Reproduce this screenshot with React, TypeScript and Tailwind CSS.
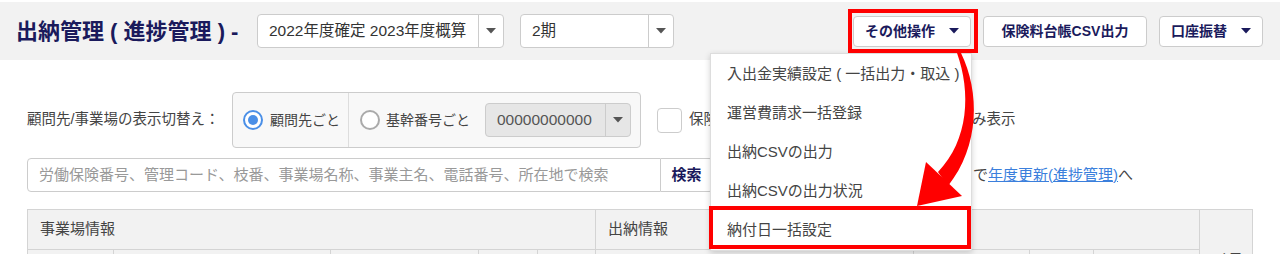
import React from 'react';

// 小さい三角 (セレクト・ボタンのキャレット)
const Caret: React.FC<{ className?: string }> = ({ className = 'text-[#555]' }) => (
  <svg width="10" height="6" viewBox="0 0 10 6" className={className}>
    <path d="M0 0 L10 0 L5 5.5 Z" fill="currentColor" />
  </svg>
);

const Select: React.FC<{ label: string; width: string; disabled?: boolean }> = ({ label, width, disabled }) => (
  <div className={`flex h-[34px] ${width} rounded-[4px] border border-[#ccc] ${disabled ? 'bg-[#e6e6e6]' : 'bg-white'}`}>
    <div className={`flex-1 flex items-center px-[11px] text-[15.5px] whitespace-nowrap overflow-hidden ${disabled ? 'text-[#555]' : 'text-[#333]'}`}>{label}</div>
    <div className="w-[25px] flex items-center justify-center border-l border-[#ccc]">
      <Caret />
    </div>
  </div>
);

const Radio: React.FC<{ checked?: boolean }> = ({ checked }) => (
  <span className={`shrink-0 w-[20px] h-[20px] rounded-full border-2 flex items-center justify-center bg-white ${checked ? 'border-[#4a8fe7]' : 'border-[#aaa]'}`}>
    {checked && <span className="w-[10px] h-[10px] rounded-full bg-[#4a8fe7]" />}
  </span>
);

const menuItems = [
  '入出金実績設定 ( 一括出力・取込 )',
  '運営費請求一括登録',
  '出納CSVの出力',
  '出納CSVの出力状況',
  '納付日一括設定',
];

const App: React.FC = () => {
  return (
    <div className="relative w-[1280px] h-[254px] overflow-hidden bg-white font-['Liberation_Sans','Noto_Sans_CJK_JP',sans-serif]">
      {/* ヘッダー */}
      <header className="h-[60px] bg-[#f2f2f2] border-t-2 border-white flex items-center pl-4 pr-[17px]">
        <h1 className="w-[225px] text-[22px] font-bold text-[#1a1a5c] whitespace-nowrap">出納管理 ( 進捗管理 ) -</h1>
        <div className="ml-4 flex gap-4">
          <Select label="2022年度確定 2023年度概算" width="w-[247px]" />
          <Select label="2期" width="w-[154px]" />
        </div>
        <div className="ml-auto flex gap-3">
          <button className="h-[31px] w-[118px] bg-white border border-[#ccc] rounded-[4px] flex items-center justify-center gap-[14px] text-[14px] font-bold text-[#1a1a5c]">
            その他操作 <Caret className="text-[#1a1a5c]" />
          </button>
          <button className="h-[31px] w-[164px] bg-white border border-[#ccc] rounded-[4px] text-[14px] font-bold text-[#1a1a5c]">
            保険料台帳CSV出力
          </button>
          <button className="h-[31px] w-[104px] bg-white border border-[#ccc] rounded-[4px] flex items-center justify-center gap-[14px] text-[14px] font-bold text-[#1a1a5c]">
            口座振替 <Caret className="text-[#1a1a5c]" />
          </button>
        </div>
      </header>

      {/* 検索条件 */}
      <div className="pl-[27px] pt-[32px] text-[14.5px] text-[#444]">
        <div className="flex items-center h-[56px]">
          <span className="w-[191px] whitespace-nowrap">顧問先/事業場の表示切替え：</span>
          <div className="ml-[14px] h-[56px] w-[409px] flex items-center border border-[#ccc] rounded-[4px] bg-[#f8f8f8] text-[14px]">
            <label className="flex items-center gap-[7px] px-[10px] h-full border-r border-[#ddd] w-[116px]">
              <Radio checked />
              <span className="whitespace-nowrap">顧問先ごと</span>
            </label>
            <label className="flex items-center gap-[6px] pl-[11px] h-full w-[136px]">
              <Radio />
              <span className="whitespace-nowrap">基幹番号ごと</span>
            </label>
            <div>
              <Select label="00000000000" width="w-[146px]" disabled />
            </div>
          </div>
          <span className="ml-4 w-[25px] h-[25px] rounded-[4px] border border-[#ccc] bg-white" />
          <span className="ml-[7px] w-[283px] whitespace-nowrap overflow-hidden">保険料の未納・過納がある顧問先/事業場の</span>
          <span className="whitespace-nowrap">み表示</span>
        </div>

        <div className="flex items-center mt-[10px] h-[34px]">
          <div className="w-[634px] h-[34px] border border-[#ccc] rounded-l-[4px] flex items-center px-[11px] text-[15px] text-[#999] whitespace-nowrap overflow-hidden">
            労働保険番号、管理コード、枝番、事業場名称、事業主名、電話番号、所在地で検索
          </div>
          <button className="w-[52px] h-[34px] border border-l-0 border-[#ccc] rounded-r-[4px] text-[15px] font-bold text-[#1a1a5c]">検索</button>
          <span className="ml-[16px] w-[244px] whitespace-nowrap overflow-hidden">※年度更新の手続きは各事業場画面</span>
          <span className="whitespace-nowrap text-[15px]">で<a className="text-[#3b7fdc] underline">年度更新(進捗管理)</a>へ</span>
        </div>

        {/* 一覧テーブル */}
        <table className="mt-[17px] border-collapse table-fixed w-[1225px] text-[15px] text-[#444]">
          <colgroup>
            <col className="w-[86px]" />
            <col className="w-[217px]" />
            <col className="w-[148px]" />
            <col className="w-[59px]" />
            <col className="w-[58px]" />
            <col className="w-[318px]" />
            <col className="w-[116px]" />
            <col className="w-[64px]" />
            <col className="w-[106px]" />
            <col className="w-[53px]" />
          </colgroup>
          <thead>
            <tr className="h-[40px] bg-[#f2f2f2]">
              <th colSpan={5} className="border border-[#d4d4d4] text-left font-normal pl-[12px]">事業場情報</th>
              <th colSpan={4} className="border border-[#d4d4d4] text-left font-normal pl-[12px]">出納情報</th>
              <th rowSpan={2} className="border border-[#d4d4d4] text-left font-normal pl-[13px] align-middle">メモ</th>
            </tr>
            <tr className="h-[60px] bg-[#f2f2f2]">
              {Array.from({ length: 9 }).map((_, i) => (
                <th key={i} className="border border-[#d4d4d4]" />
              ))}
            </tr>
          </thead>
        </table>
      </div>

      {/* その他操作メニュー */}
      <div className="absolute left-[710px] top-[53px] w-[262px] bg-white border border-[#ddd] shadow-[0_2px_6px_rgba(0,0,0,0.18)] pt-[1px] text-[15px] text-[#444]">
        {menuItems.map(item => (
          <div key={item} className="h-[39px] flex items-center pl-[16px] whitespace-nowrap">{item}</div>
        ))}
      </div>

      {/* 注釈: 赤枠と矢印 */}
      <div className="absolute left-[848px] top-[9px] w-[130px] h-[44px] border-4 border-[#f00]" />
      <div className="absolute left-[709px] top-[206px] w-[262px] h-[43px] border-4 border-[#f00]" />
      <svg className="absolute left-0 top-0 pointer-events-none" width="1280" height="254">
        <path d="M957 53 C971 92 969 140 938 172 L948 186 C980 146 980 92 961 53 Z" fill="#f00" />
        <polygon points="926,162 962,196 917,206" fill="#f00" />
      </svg>
    </div>
  );
};

export default App;
